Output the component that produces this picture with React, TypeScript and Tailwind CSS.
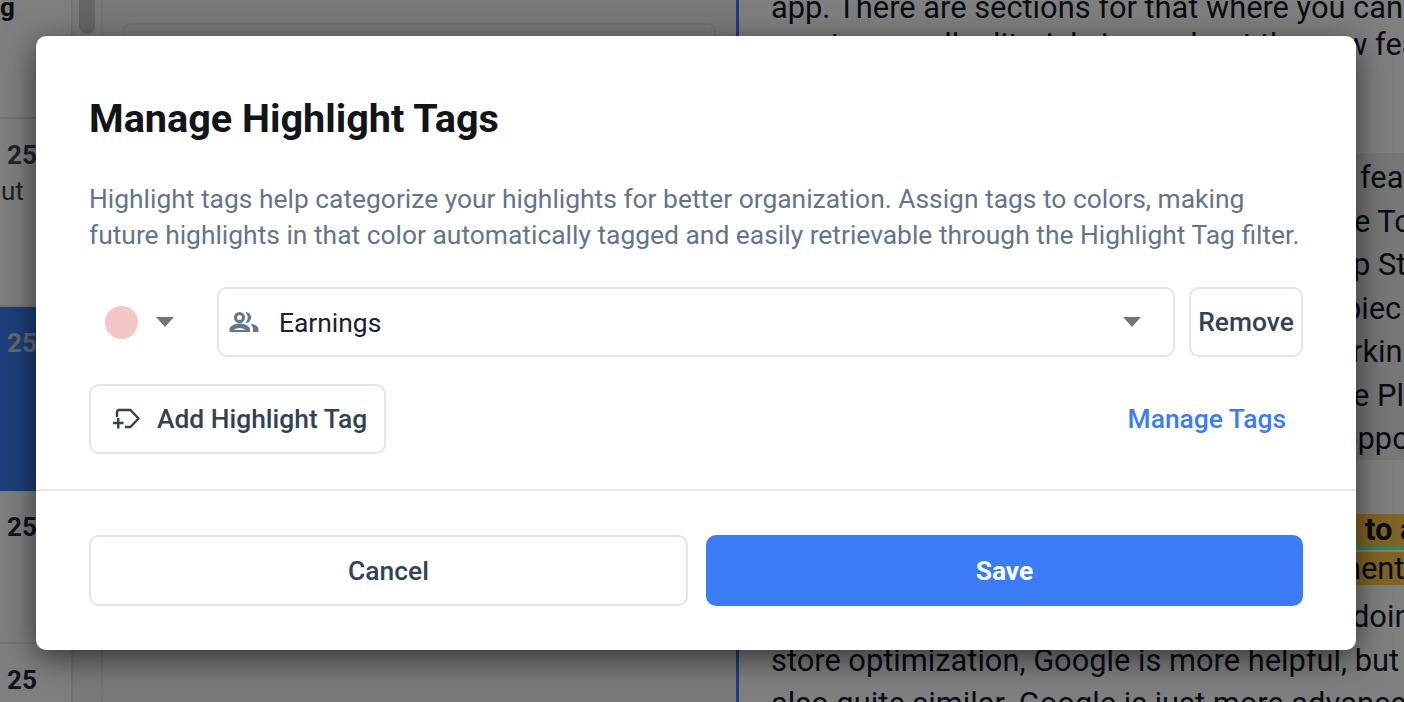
function Caret() {
  return (
    <svg width="18" height="10" viewBox="0 0 18 10" className="shrink-0">
      <path d="M0 0h18l-9 10z" fill="#757575" />
    </svg>
  );
}

function PeopleIcon() {
  return (
    <svg width="30" height="22" viewBox="0 0 30 22" fill="none" className="shrink-0">
      <circle cx="10.500" cy="6.500" r="4" stroke="#64748b" strokeWidth="3" />
      <path d="M0.500 21v-2.500c0-3.500 5-6 10-6s10.500 2.500 10.500 6V21H.5z" fill="#64748b" />
      <path d="M4.500 19c1.500-1.200 3.800-2 6-2s4.500.8 6 2h-12z" fill="#fff" />
      <path d="M16.500 1a5.500 5.500 0 0 1 0 11c1.300-1.500 2.200-3.400 2.200-5.500s-.9-4-2.200-5.500z" fill="#64748b" />
      <path d="M21.500 12.800c4.200.5 8 2.300 8 5.700V21H24v-2.500c0-2.200-1-4.200-2.500-5.700z" fill="#64748b" />
    </svg>
  );
}

function AddTagIcon() {
  return (
    <svg width="28" height="24" viewBox="0 0 28 24" fill="none" className="shrink-0">
      <path d="M4 10V5a2 2 0 0 1 2-2h11.500l8 8.500-8 8.500H12" stroke="#334155" strokeWidth="2.400" strokeLinejoin="round" />
      <path d="M0 16h10.500M5.250 11v10.500" stroke="#334155" strokeWidth="2.400" />
    </svg>
  );
}

const dateRows = [
  { h: 'h-[188px]', color: 'text-[#3d4654]', sub: 'ut', bg: 'bg-white border-b-2 border-[#e5e7eb]' },
  { h: 'h-[184px]', color: 'text-[#cfd3da]', sub: '', bg: 'bg-[#3b7ef6]' },
  { h: 'h-[153px]', color: 'text-[#1f2937]', sub: '', bg: 'bg-white border-b-2 border-[#e5e7eb]' },
  { h: 'h-[58px]', color: 'text-[#1f2937]', sub: '', bg: 'bg-white' },
];

const topLines = ['app. There are sections for that where you can', 'create as well editorials in us about the new fea'];
const tailLines = [
  { text: 'feat', pad: 'pl-[621px]' },
  { text: 'e To', pad: 'pl-[615px]' },
  { text: 'p St', pad: 'pl-[614px]' },
  { text: 'piec', pad: 'pl-[605px]' },
  { text: 'rkin', pad: 'pl-[613px]' },
  { text: 'e Pl', pad: 'pl-[614px]' },
  { text: 'oppo', pad: 'pl-[601px]' },
];

export default function App() {
  return (
    <div className="relative h-[702px] w-[1404px] overflow-hidden bg-white font-['Roboto',sans-serif]">
      {/* App behind the dialog */}
      <div className="flex h-full">
        <div className="w-[73px] shrink-0 border-r-2 border-[#e5e7eb]">
          <div className="h-[119px] border-b-2 border-[#e5e7eb] text-[26px] font-bold leading-[14px] text-[#111827]">g</div>
          {dateRows.map((row, i) => (
            <div key={i} className={`${row.h} ${row.bg} pl-[7px] pt-[18px]`}>
              <div className={`text-[26px] font-bold leading-[36px] ${row.color}`}>25</div>
              <div className="-ml-[6px] text-[26px] leading-[36px] text-[#374151]">{row.sub}</div>
            </div>
          ))}
        </div>
        <div className="w-[30px] shrink-0 border-r-2 border-[#e5e7eb] bg-[#f3f4f6] px-[6px]">
          <div className="h-[34px] w-[16px] rounded-b-full bg-[#cccccc]" />
        </div>
        <div className="w-[633px] shrink-0 bg-[#f3f4f8] pl-[20px] pt-[23px]">
          <div className="h-[60px] w-[593px] rounded-lg border-2 border-[#e5e7eb]" />
        </div>
        <div className="w-[3px] shrink-0 bg-[#3b7ef6]" />
        <div className="min-w-0 flex-1 overflow-hidden text-[30.800px] text-[#111827]">
          <div className="-mt-[11px] h-[164px] whitespace-nowrap pl-[32px] leading-[37px]">
            {topLines.map(line => <div key={line}>{line}</div>)}
          </div>
          <div className="h-[307px] bg-[#eeeeee] pt-[3px] leading-[43.500px]">
            {tailLines.map(line => <div key={line.text} className={`${line.pad} whitespace-nowrap`}>{line.text}</div>)}
          </div>
          <div className="h-[54px]" />
          <div className="h-[32px] whitespace-nowrap bg-[#ffc94a] pl-[626px] font-bold leading-[32px]">to a</div>
          <div className="h-[6px] border-t-[4px] border-[#74ffaa]" />
          <div className="h-[33px] whitespace-nowrap bg-[#ffc94a] pl-[595px] leading-[33px]">ment</div>
          <div className="whitespace-nowrap pl-[32px] pt-[10px] leading-[43.500px]">
            <div className="pl-[581px]">doin</div>
            <div>store optimization, Google is more helpful, but</div>
            <div>also quite similar. Google is just more advanced</div>
          </div>
        </div>
      </div>

      {/* Dialog */}
      <div className="absolute inset-0 bg-black/50 pl-[36px] pt-[36px]">
        <div className="h-[614px] w-[1320px] rounded-[10px] bg-white shadow-[0_8px_32px_rgba(0,0,0,0.6)]">
          <div className="h-[453px] px-[53px] pt-[61px]">
            <h2 className="text-[39.600px] font-bold leading-[44px] text-[#111418]">Manage Highlight Tags</h2>
            <p className="mt-[40px] whitespace-nowrap text-[26.400px] leading-[36px] text-[#64748b]">
              Highlight tags help categorize your highlights for better organization. Assign tags to colors, making
              <br />
              future highlights in that color automatically tagged and easily retrievable through the Highlight Tag filter.
            </p>
            <div className="mt-[34px] flex h-[70px] items-center">
              <div className="flex w-[128px] shrink-0 items-center pl-[16px]">
                <div className="h-[33px] w-[33px] rounded-full bg-[#f4c7c7]" />
                <div className="ml-[18px]"><Caret /></div>
              </div>
              <div className="flex h-[70px] w-[958px] shrink-0 items-center rounded-[10px] border-2 border-[#e2e6ea] pl-[10px] pr-[32px]">
                <PeopleIcon />
                <span className="ml-[20px] flex-1 pt-[3px] text-[26.400px] text-[#1a202c]">Earnings</span>
                <Caret />
              </div>
              <button className="ml-[14px] h-[70px] w-[114px] shrink-0 rounded-[10px] border-2 border-[#e2e6ea] pt-[2px] text-[26.400px] font-medium text-[#334155]">
                Remove
              </button>
            </div>
            <div className="mt-[27px] flex h-[70px] items-center justify-between">
              <button className="flex h-[70px] w-[297px] items-center rounded-[10px] border-2 border-[#e2e6ea] pl-[22px] text-[26.400px] font-medium text-[#334155]">
                <AddTagIcon />
                <span className="ml-[16px] pt-[2px]">Add Highlight Tag</span>
              </button>
              <span className="mr-[17px] pt-[2px] text-[26.400px] font-medium text-[#3b7cf6]">Manage Tags</span>
            </div>
          </div>
          <div className="h-[2px] bg-[#e2e6ea]" />
          <div className="flex gap-[18px] px-[53px] pt-[44px]">
            <button className="h-[71px] w-[599px] rounded-[10px] border-2 border-[#e2e6ea] pt-[2px] text-[26.400px] font-medium text-[#334155]">Cancel</button>
            <button className="h-[71px] w-[597px] rounded-[10px] bg-[#3b7cf6] pt-[2px] text-[26.400px] font-bold text-white">Save</button>
          </div>
        </div>
      </div>
    </div>
  );
}
